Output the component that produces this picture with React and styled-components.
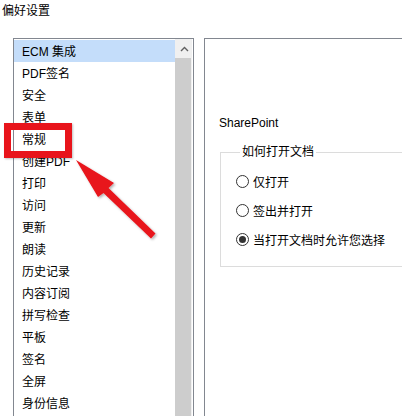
import React from 'react';
import styled, { createGlobalStyle } from 'styled-components';

const GlobalStyle = createGlobalStyle`
  html, body {
    margin: 0;
    padding: 0;
    background: #fff;
    overflow: hidden;
  }
  body {
    font-family: "Liberation Sans", "Noto Sans CJK SC", sans-serif;
    font-size: 12px;
    color: #000;
  }
`;

const Page = styled.div`
  position: relative;
  width: 402px;
  height: 416px;
  overflow: hidden;
  display: flex;
  flex-direction: column;
`;

const Title = styled.div`
  height: 38px;
  box-sizing: border-box;
  padding: 4px 0 0 2px;
  line-height: 14px;
  font-size: 12px;
`;

const Body = styled.div`
  flex: 1;
  display: flex;
  gap: 10px;
  padding-left: 13px;
  min-height: 0;
`;

const ListBox = styled.div`
  width: 181px;
  flex-shrink: 0;
  box-sizing: border-box;
  border: 1px solid #828790;
  border-bottom: none;
  display: flex;
  height: 400px;
`;

const Items = styled.div`
  flex: 1;
  padding-top: 1px;
`;

const Item = styled.div`
  height: 22px;
  line-height: 24px;
  padding-left: 8px;
  background: ${(p) => (p.$selected ? '#c4ddfa' : 'transparent')};
  white-space: nowrap;
`;

const ScrollBar = styled.div`
  width: 17px;
  background: #f0f0f0;
  display: flex;
  flex-direction: column;
  border-right: 1px solid #fff;
`;

const ScrollButton = styled.div`
  height: 19px;
  display: flex;
  align-items: center;
  justify-content: center;
  padding-left: 1px;
`;

const Thumb = styled.div`
  flex: 1;
  margin-right: 1px;
  background: #cdcdcd;
`;

const Panel = styled.div`
  flex: 1;
  border-left: 1px solid #828790;
  border-top: 1px solid #828790;
  padding: 76px 0 0 14px;
  overflow: hidden;
`;

const Label = styled.div`
  line-height: 16px;
  height: 16px;
`;

const Group = styled.fieldset`
  margin: 13px 0 0 1px;
  width: 300px;
  border: 1px solid #dcdcdc;
  padding: 11px 0 17px 15px;
  display: flex;
  flex-direction: column;
  gap: 9px;
`;

const Legend = styled.legend`
  margin-left: 4px;
  padding: 0 2px;
  line-height: 16px;
  font-size: 12px;
`;

const RadioRow = styled.div`
  height: 20px;
  display: flex;
  align-items: center;
  gap: 4px;
`;

const RadioCircle = styled.span`
  width: 13px;
  height: 13px;
  box-sizing: border-box;
  border: 1px solid #333;
  border-radius: 50%;
  display: flex;
  align-items: center;
  justify-content: center;
  background: #fff;

  &::after {
    content: '';
    width: 7px;
    height: 7px;
    border-radius: 50%;
    background: ${(p) => (p.$checked ? '#333' : 'transparent')};
  }
`;

const Highlight = styled.div`
  position: absolute;
  left: 4px;
  top: 123px;
  width: 68px;
  height: 35px;
  box-sizing: border-box;
  border: 7px solid #e8141b;
  box-shadow: 1px 1px 2px rgba(0, 0, 0, 0.25);
  pointer-events: none;
`;

const ArrowLayer = styled.svg`
  position: absolute;
  left: 0;
  top: 0;
  pointer-events: none;
`;

const items = [
  'ECM 集成', 'PDF签名', '安全', '表单', '常规', '创建PDF', '打印', '访问',
  '更新', '朗读', '历史记录', '内容订阅', '拼写检查', '平板', '签名', '全屏', '身份信息',
];

const options = [
  { label: '仅打开', checked: false },
  { label: '签出并打开', checked: false },
  { label: '当打开文档时允许您选择', checked: true },
];

export default function App() {
  return (
    <Page>
      <GlobalStyle />
      <Title>偏好设置</Title>
      <Body>
        <ListBox>
          <Items>
            {items.map((name, i) => (
              <Item key={name} $selected={i === 0}>{name}</Item>
            ))}
          </Items>
          <ScrollBar>
            <ScrollButton>
              <svg width="9" height="6" viewBox="0 0 9 6">
                <polyline points="1,5 4.5,1.5 8,5" fill="none" stroke="#606060" strokeWidth="1.4" />
              </svg>
            </ScrollButton>
            <Thumb />
          </ScrollBar>
        </ListBox>
        <Panel>
          <Label>SharePoint</Label>
          <Group>
            <Legend>如何打开文档</Legend>
            {options.map((o) => (
              <RadioRow key={o.label}>
                <RadioCircle $checked={o.checked} />
                <span>{o.label}</span>
              </RadioRow>
            ))}
          </Group>
        </Panel>
      </Body>
      <Highlight />
      <ArrowLayer width="402" height="416" viewBox="0 0 402 416">
        <defs>
          <filter id="arrowShadow" x="-20%" y="-20%" width="140%" height="140%">
            <feDropShadow dx="1.5" dy="1.5" stdDeviation="1.2" floodColor="#000" floodOpacity="0.3" />
          </filter>
        </defs>
        <polygon
          points="76,160 114,183 108.5,188 155.5,233.5 151,238.5 103.5,193 98,197"
          fill="#e8141b"
          strokeLinejoin="round"
          filter="url(#arrowShadow)"
        />
      </ArrowLayer>
    </Page>
  );
}
